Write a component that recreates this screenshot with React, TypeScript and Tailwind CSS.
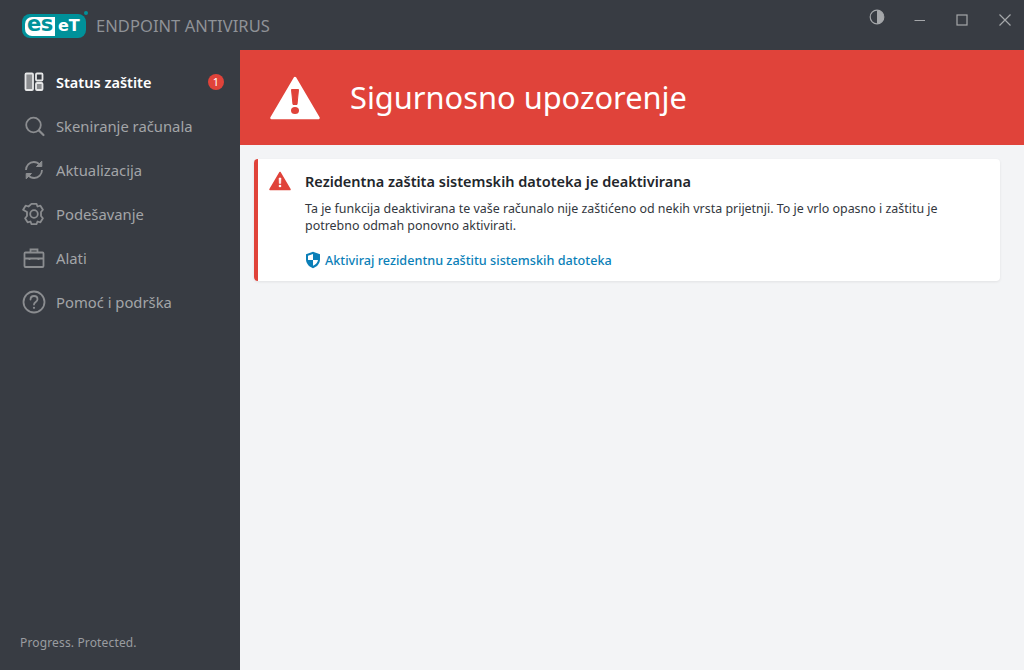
import React from "react";

function NavIcon({ children, active }: { children: React.ReactNode; active?: boolean }) {
  return (
    <svg width="24" height="24" viewBox="0 0 24 24" fill="none" stroke={active ? "#e6e7e8" : "#8b8d90"} strokeWidth="1.800" className="shrink-0">
      {children}
    </svg>
  );
}

const items: { label: string; icon: React.ReactNode; active?: boolean }[] = [
  {
    label: "Status zaštite",
    active: true,
    icon: (
      <>
        <rect x="3.500" y="3.500" width="7.500" height="16.500" rx="1" fill="#8b8d90" />
        <rect x="14" y="3.500" width="6.500" height="7" rx="1" />
        <rect x="14" y="13" width="6.500" height="7" rx="1" fill="#8b8d90" />
      </>
    ),
  },
  {
    label: "Skeniranje računala",
    icon: (
      <>
        <circle cx="11.500" cy="11" r="7.300" />
        <path d="M17 16.500l4.500 4.500" strokeLinecap="round" strokeWidth="2.200" />
      </>
    ),
  },
  {
    label: "Aktualizacija",
    icon: (
      <>
        <path d="M4 12c0-4.500 3.400-8 7.800-8 2.600 0 4.400 1 5.700 2.800" />
        <path d="M20 12c0 4.500-3.400 8-7.800 8-2.600 0-4.400-1-5.700-2.800" />
        <path d="M19.800 3.200v5.300h-5.300z" fill="#8b8d90" strokeWidth="1" />
        <path d="M4.200 20.800v-5.300h5.300z" fill="#8b8d90" strokeWidth="1" />
      </>
    ),
  },
  {
    label: "Podešavanje",
    icon: (
      <>
        <path d="M9.500 1.800h5l1 2.700 2.900-.8 2.500 4-1.900 2.300v4l1.900 2.300-2.500 4-2.900-.8-1 2.700h-5l-1-2.700-2.900.8-2.500-4 1.900-2.300v-4L1.100 7.700l2.500-4 2.900.8z" strokeLinejoin="round" />
        <circle cx="12" cy="12" r="3.800" />
      </>
    ),
  },
  {
    label: "Alati",
    icon: (
      <>
        <rect x="2.500" y="6.500" width="19" height="14.500" rx="1" />
        <path d="M8.500 6.500V3.500h7v3M2.500 12.500h19M7.500 11.500v2.500M16.500 11.500v2.500" />
      </>
    ),
  },
  {
    label: "Pomoć i podrška",
    icon: (
      <>
        <circle cx="12" cy="12" r="10.500" />
        <path d="M8.500 9.500c0-2 1.500-3.500 3.500-3.500s3.500 1.300 3.500 3.200c0 2.800-3.500 2.600-3.500 5.300" strokeLinecap="round" />
        <circle cx="12" cy="17.800" r="1.100" fill="#8b8d90" stroke="none" />
      </>
    ),
  },
];

export default function App() {
  return (
    <div className="flex h-[670px] w-[1024px] flex-col overflow-hidden bg-[#f3f4f6] font-['Noto_Sans','Open_Sans',sans-serif]">
      <header className="flex h-[50px] shrink-0 items-start justify-between bg-[#383c43]">
        <div className="flex h-[50px] items-center pt-[2px] pl-[22px]">
          <div className="relative flex h-[24px] w-[64px] shrink-0 items-center rounded-[8px] bg-[#00919a] pl-[3px] font-['DejaVu_Sans',sans-serif] leading-none font-bold">
            <span className="flex h-[19px] w-[30px] items-center justify-center rounded-l-[7px] bg-white pb-[3px] text-[21px] tracking-[-0.3px] text-[#00919a]">es</span>
            <span className="flex h-[19px] items-center pb-[1px] pl-[3px] text-[16px] text-white">eT</span>
            <span className="absolute -top-[3px] -right-[2px] h-[4px] w-[4px] rounded-full bg-[#00919a]" />
          </div>
          <span className="ml-[10px] text-[16.500px] whitespace-nowrap tracking-[0.05px] text-[#8f9297]">ENDPOINT ANTIVIRUS</span>
        </div>
        <div className="flex items-center pt-[7px] pr-[12px]">
          <svg width="20" height="20" viewBox="0 0 20 20" className="mr-[27px]">
            <circle cx="10" cy="10" r="6.800" fill="none" stroke="#a5a7aa" strokeWidth="1.200" />
            <path d="M10 3.200a6.800 6.800 0 0 1 0 13.600z" fill="#a5a7aa" />
          </svg>
          <svg width="12" height="12" viewBox="0 0 12 12" className="mr-[30px] mt-[5px]">
            <path d="M0.500 6.500h10.500" stroke="#a5a7aa" strokeWidth="1" />
          </svg>
          <svg width="12" height="12" viewBox="0 0 12 12" className="mr-[30px] mt-[5px]">
            <rect x="1" y="1" width="10" height="10" fill="none" stroke="#a5a7aa" strokeWidth="1.200" />
          </svg>
          <svg width="14" height="14" viewBox="0 0 14 14" className="mt-[5px]">
            <path d="M1.500 1.500l11 11M12.500 1.500l-11 11" stroke="#a5a7aa" strokeWidth="1.200" />
          </svg>
        </div>
      </header>
      <div className="flex min-h-0 flex-1">
        <aside className="flex w-[240px] shrink-0 flex-col bg-[#383c43]">
          <nav className="flex flex-col pt-[10px]">
            {items.map((it) => (
              <div key={it.label} className="flex h-[44px] items-center pl-[22px]">
                <NavIcon active={it.active}>{it.icon}</NavIcon>
                <span className={"ml-[10px] " + (it.active ? "pt-[1px] text-[14.500px] font-semibold text-white" : "text-[14.800px] text-[#a3a5a8]")}>{it.label}</span>
                {it.active && (
                  <span className="ml-auto mr-[16px] flex h-[16px] w-[16px] items-center justify-center rounded-full bg-[#e0433a] text-[11px] text-white">1</span>
                )}
              </div>
            ))}
          </nav>
          <div className="mt-auto pb-[18px] pl-[20px] text-[12px] leading-[18px] tracking-[0.15px] text-[#9a9ca0]">Progress. Protected.</div>
        </aside>
        <main className="flex min-w-0 flex-1 flex-col">
          <div className="flex h-[95px] shrink-0 items-center bg-[#e0433a] pl-[30px]">
            <svg width="50" height="44" viewBox="0 0 50 44">
              <path d="M25 2L48.500 42H1.500z" fill="white" stroke="white" strokeWidth="2.500" strokeLinejoin="round" />
              <path d="M21.500 13.500h7l-1.500 15h-4z" fill="#e0433a" stroke="#e0433a" strokeLinejoin="round" />
              <ellipse cx="25" cy="34.500" rx="4" ry="3.500" fill="#e0433a" />
            </svg>
            <h1 className="ml-[30px] text-[30.800px] leading-none font-normal text-white">Sigurnosno upozorenje</h1>
          </div>
          <div className="px-[14px] pt-[14px] pr-[24px]">
            <div className="flex h-[122px] rounded-[4px] border-l-[4px] border-[#e0433a] bg-white pt-[12px] pl-[11px] shadow-[0_1px_3px_rgba(0,0,0,0.08)]">
              <svg width="22" height="20" viewBox="0 0 22 20" className="shrink-0">
                <path d="M11 1.500L21 18.500H1z" fill="#e0433a" stroke="#e0433a" strokeWidth="1.500" strokeLinejoin="round" />
                <path d="M10 7h2l-.3 5.500h-1.400z" fill="white" stroke="white" strokeWidth="0.500" />
                <circle cx="11" cy="15" r="1.300" fill="white" />
              </svg>
              <div className="ml-[14px] min-w-0 pr-[40px]">
                <div className="text-[14.500px] leading-[20px] font-semibold text-[#22262b]">Rezidentna zaštita sistemskih datoteka je deaktivirana</div>
                <p className="mt-[9px] text-[12.450px] leading-[17px] text-[#33373d]">
                  Ta je funkcija deaktivirana te vaše računalo nije zaštićeno od nekih vrsta prijetnji. To je vrlo opasno i zaštitu je potrebno odmah ponovno aktivirati.
                </p>
                <div className="mt-[17px] flex items-center">
                  <svg width="16" height="18" viewBox="0 0 16 18" className="shrink-0">
                    <path d="M8 .8l7 2.400v5c0 4.300-3 7.500-7 9-4-1.500-7-4.700-7-9v-5z" fill="#0b7fb8" />
                    <path d="M8 3v6H3V4.800zM8 9h5c-.3 2.600-2.400 4.600-5 5.800z" fill="white" />
                  </svg>
                  <span className="ml-[4px] text-[12.650px] leading-[18px] font-medium text-[#0b7fb8]">Aktiviraj rezidentnu zaštitu sistemskih datoteka</span>
                </div>
              </div>
            </div>
          </div>
        </main>
      </div>
    </div>
  );
}
